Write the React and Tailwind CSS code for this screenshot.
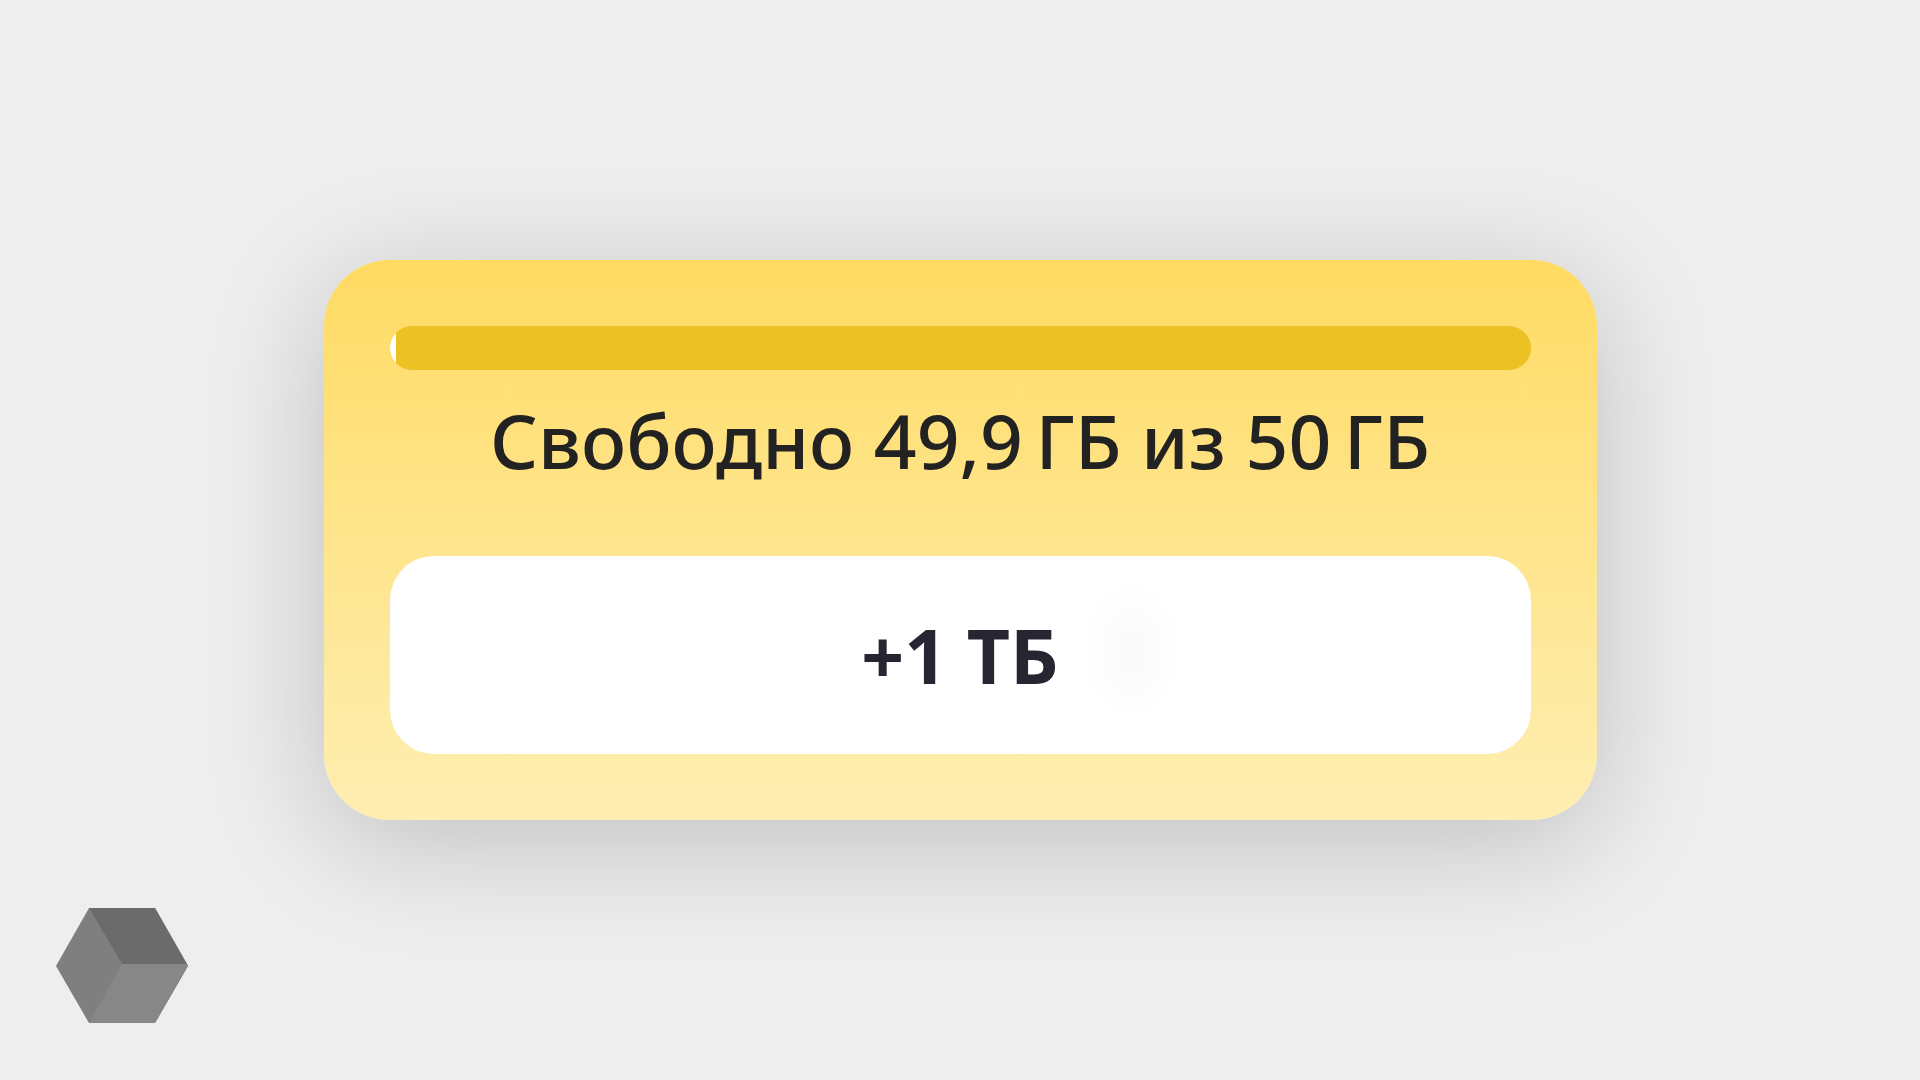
import React from "react";

const storage = { total: 50, free: 49.9 };

// narrow no-break space keeps the unit next to its number
const formatGb = (value) => `${String(value).replace(".", ",")}\u202fГБ`;

const StorageBar = ({ total, free }) => {
  const used = ((total - free) / total) * 100;

  return (
    <div
      role="progressbar"
      aria-labelledby="storage-label"
      aria-valuemin={0}
      aria-valuemax={100}
      aria-valuenow={Math.round(used)}
      className="h-11 w-full overflow-hidden rounded-full bg-[#ebc124]"
    >
      <div className="h-full min-w-[6px] bg-white" style={{ width: `${used}%` }} />
    </div>
  );
};

const CubeLogo = () => (
  <svg viewBox="0 0 132 115" className="h-[115px] w-[132px]" aria-hidden="true">
    <path d="M33 0 H99 L132 58 L99 115 H33 L0 58 Z" fill="#7f7f7f" />
    <path d="M33 0 H99 L131 56 H66 Z" fill="#6b6b6b" />
    <path d="M66 56 H131 L132 58 L99 115 H33 Z" fill="#878787" />
  </svg>
);

const App = () => {
  return (
    <div className="grid min-h-screen grid-rows-[1fr_auto_1fr] bg-[#eeeeee] font-['Noto_Sans',sans-serif]">
      <main className="row-start-2 mx-auto w-full max-w-[1273px] rounded-[66px] bg-linear-to-b from-[#ffdb61] to-[#feeeb1] p-[66px] shadow-[0_22px_120px_rgba(0,0,0,0.2)]">
        <StorageBar total={storage.total} free={storage.free} />
        <p
          id="storage-label"
          className="mt-[18px] text-center text-[75px] leading-[104px] font-medium text-[#222222]"
        >
          Свободно {formatGb(storage.free)} из {formatGb(storage.total)}
        </p>
        <button
          type="button"
          className="mt-16 h-[198px] w-full rounded-[44px] bg-white bg-[radial-gradient(ellipse_50px_70px_at_65%_48%,#f9f9f9,#ffffff)] text-[75px] font-bold text-[#262633]"
        >
          +1 ТБ
        </button>
      </main>
      <footer className="row-start-3 self-end pb-[57px] pl-14">
        <CubeLogo />
      </footer>
    </div>
  );
};

export default App;
